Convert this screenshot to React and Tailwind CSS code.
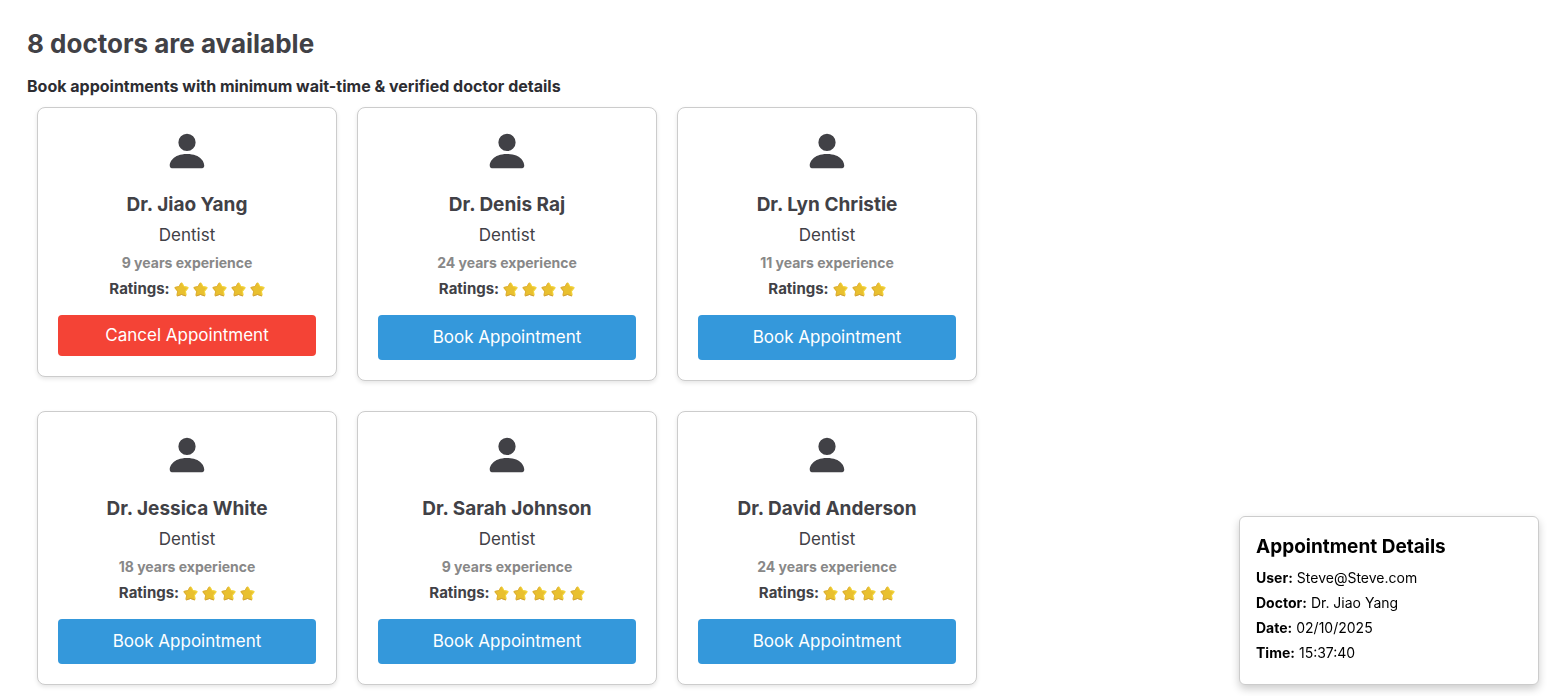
import { BsPersonFill } from "react-icons/bs";

const doctors = [
  { name: "Dr. Jiao Yang", years: 9, stars: 5, booked: true },
  { name: "Dr. Denis Raj", years: 24, stars: 4 },
  { name: "Dr. Lyn Christie", years: 11, stars: 3 },
  { name: "Dr. Jessica White", years: 18, stars: 4 },
  { name: "Dr. Sarah Johnson", years: 9, stars: 5 },
  { name: "Dr. David Anderson", years: 24, stars: 4 },
];

const details = [
  ["User:", "Steve@Steve.com"],
  ["Doctor:", "Dr. Jiao Yang"],
  ["Date:", "02/10/2025"],
  ["Time:", "15:37:40"],
];

function Star() {
  return (
    <svg viewBox="0 0 30 30" className="size-[15px]" aria-hidden="true">
      <path
        d="M15 3 18.8 10 27 11.6 21.6 18 22.8 26.4 15 23.4 7.2 26.4 8.4 18 3 11.6 11.2 10Z"
        fill="#e9c02f"
        stroke="#e9c02f"
        strokeWidth="4"
        strokeLinejoin="round"
      />
      <path d="M13.6 2.5 10 9 2 11.2 7.4 18 6 27" fill="none" stroke="#d9a93a" strokeWidth="1.6" strokeLinejoin="round" />
      <path d="M16.4 2.5 20 9 28 11.2 23 18 24 26" fill="none" stroke="#f5da3e" strokeWidth="1.8" strokeLinejoin="round" />
      <path d="M6.4 28 15 25 23.6 28" fill="none" stroke="#c8963c" strokeWidth="1.6" strokeLinejoin="round" />
    </svg>
  );
}

function DoctorCard({ name, years, stars, booked }) {
  return (
    <article className="flex w-[300px] flex-col items-center rounded-lg border border-[#ccc] bg-white p-5 shadow-[0_2px_4px_rgba(0,0,0,0.1)]">
      <BsPersonFill className="size-[46px] text-[#414146]" aria-hidden="true" />
      <h2 className="mt-[17px] text-[19px] leading-7 font-bold text-[#414146]">{name}</h2>
      <p className="mt-1 text-[17px] leading-6 text-[#414146]">Dentist</p>
      <p className="mt-1 text-sm leading-6 font-bold text-[#888]">{years} years experience</p>
      <p className="mt-0.5 flex h-6 items-center gap-1 text-[15px] font-bold text-[#414146]">
        Ratings:
        <span className="flex gap-1" role="img" aria-label={`${stars} stars`}>
          {Array.from({ length: stars }, (_, i) => (
            <Star key={i} />
          ))}
        </span>
      </p>
      {booked ? (
        <button type="button" className="mt-3.5 h-[41px] w-full rounded bg-[#f44336] text-[17px] text-white">
          Cancel Appointment
        </button>
      ) : (
        <button type="button" className="mt-3.5 h-[45px] w-full rounded bg-[#3498db] text-[17px] text-white">
          Book Appointment
        </button>
      )}
    </article>
  );
}

export default function App() {
  return (
    <div className="bg-white font-['Inter',sans-serif]">
      <main className="px-[27px] pt-6 pb-[11px]">
        <h1 className="text-[26px] leading-10 font-bold text-[#414146]">8 doctors are available</h1>
        <h3 className="mt-2 text-base leading-7 font-bold text-[#2d2d32]">
          Book appointments with minimum wait-time &amp; verified doctor details
        </h3>
        <section className="mt-[7px] flex max-w-5xl flex-wrap items-start gap-x-5 gap-y-[30px] px-[10px]">
          {doctors.map((doctor) => (
            <DoctorCard key={doctor.name} {...doctor} />
          ))}
        </section>
      </main>
      <aside className="fixed right-[9px] bottom-[11px] w-[300px] rounded-md border border-[#ccc] bg-white px-4 pt-4 pb-[19px] text-black shadow-[0_4px_8px_rgba(0,0,0,0.2)]">
        <h2 className="text-[19px] leading-7 font-bold">Appointment Details</h2>
        <dl className="mt-1 text-sm leading-[25px]">
          {details.map(([label, value]) => (
            <div key={label} className="flex gap-1">
              <dt className="font-bold">{label}</dt>
              <dd>{value}</dd>
            </div>
          ))}
        </dl>
      </aside>
    </div>
  );
}
